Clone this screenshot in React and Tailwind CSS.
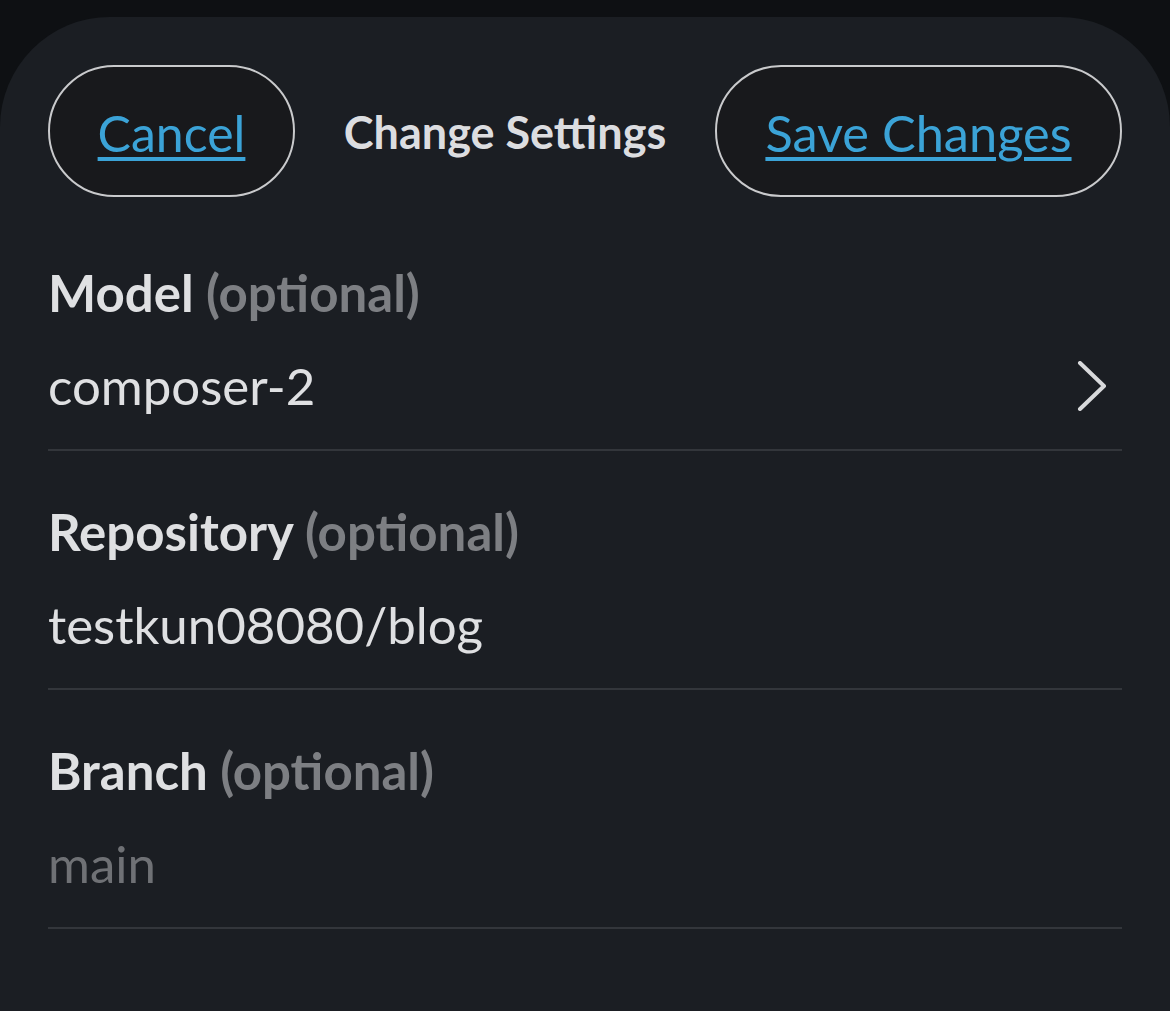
import React, { useState } from "react";

const fields = [
  { key: "model", label: "Model", chevron: true },
  { key: "repo", label: "Repository" },
  { key: "branch", label: "Branch", placeholder: "main" },
];

function App() {
  const [form, setForm] = useState({ model: "composer-2", repo: "testkun08080/blog", branch: "" });

  return (
    <div className="min-h-[1011px] bg-[#0e1013] pt-[17px] font-['Lato',sans-serif]">
      <div className="h-[994px] rounded-t-[110px] bg-[#1b1e23] px-12">
        <div className="flex items-center justify-between pt-[48px] mb-[15px]">
          <button
            type="button"
            className="h-[132px] w-[247px] rounded-full border-2 border-[#c9cacc] bg-[#18191c] pt-[4px] text-[50px] text-[#3ba3d7] underline underline-offset-[5px] decoration-[4px]"
          >
            Cancel
          </button>
          <h1 className="mt-[3px] text-[45px] font-bold text-[#dcdde0]">Change Settings</h1>
          <button
            type="button"
            className="h-[132px] w-[407px] rounded-full border-2 border-[#c9cacc] bg-[#18191c] pt-[4px] text-[50.5px] text-[#3ba3d7] underline underline-offset-[5px] decoration-[4px]"
          >
            Save Changes
          </button>
        </div>

        {fields.map((f) => (
          <div key={f.key} className="border-b-2 border-[#33363b] pt-[55px] pb-[38px]">
            <div className="text-[51px] font-bold leading-none text-[#dfe0e2]">
              {f.label} <span className="text-[#7d7f83]">(optional)</span>
            </div>
            <div className="mt-[42px] flex items-center justify-between">
              <input
                className="-my-[6px] h-[63px] w-full bg-transparent p-0 text-[51px] leading-none text-[#dfe0e2] outline-none placeholder:text-[#6f7175]"
                value={form[f.key]}
                placeholder={f.placeholder}
                onChange={(e) => setForm((p) => ({ ...p, [f.key]: e.target.value }))}
              />
              {f.chevron && (
                <svg width="32" height="50" viewBox="0 0 32 50" fill="none" className="shrink-0 mr-[14px]">
                  <path d="M4 2 L28 25 L4 48" stroke="#d8d9db" strokeWidth="4" strokeLinecap="round" strokeLinejoin="round" />
                </svg>
              )}
            </div>
          </div>
        ))}
      </div>
    </div>
  );
}

export default App;
